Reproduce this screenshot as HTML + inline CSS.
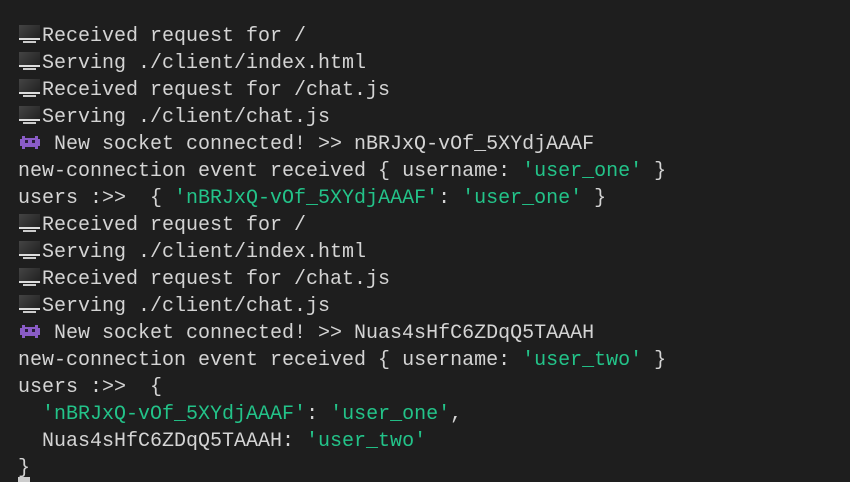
<!DOCTYPE html>
<html><head><meta charset="utf-8"><style>
html,body{margin:0;background:#1e1e1e;width:850px;height:482px;overflow:hidden}
pre{margin:0;position:absolute;left:18px;top:23px;font-family:"Liberation Mono",monospace;font-size:20px;line-height:27px;color:#d4d4d4;white-space:pre}
.g{color:#23c389}
.pc{display:inline-block;width:24px;height:20px;position:relative;vertical-align:-3px}
.pc:before{content:"";position:absolute;left:1px;top:1px;width:21px;height:13px;background:linear-gradient(135deg,#444 0,#333 50%,#222 100%);border-bottom:2px solid #ddd}
.pc:after{content:"";position:absolute;left:5px;top:17px;width:13px;height:2px;background:#ccc}
.al{display:inline-block;width:24px;height:20px;vertical-align:-3px}
.cur{position:absolute;left:18px;top:477px;width:12px;height:5px;background:#ccc}
</style></head><body>
<pre><span class="pc"></span>Received request for /
<span class="pc"></span>Serving ./client/index.html
<span class="pc"></span>Received request for /chat.js
<span class="pc"></span>Serving ./client/chat.js
<svg class="al" viewBox="0 0 24 20"><path fill="#8a5cc7" d="M4 4h3v2h10V4h3v3h2v7h-2v3h-3v-2H7v2H4v-3H2V7h2z"/><rect x="7" y="8" width="3" height="3" fill="#2a1e3a"/><rect x="14" y="8" width="3" height="3" fill="#2a1e3a"/></svg> New socket connected! &gt;&gt; nBRJxQ-vOf_5XYdjAAAF
new-connection event received { username: <span class="g">'user_one'</span> }
users :&gt;&gt;  { <span class="g">'nBRJxQ-vOf_5XYdjAAAF'</span>: <span class="g">'user_one'</span> }
<span class="pc"></span>Received request for /
<span class="pc"></span>Serving ./client/index.html
<span class="pc"></span>Received request for /chat.js
<span class="pc"></span>Serving ./client/chat.js
<svg class="al" viewBox="0 0 24 20"><path fill="#8a5cc7" d="M4 4h3v2h10V4h3v3h2v7h-2v3h-3v-2H7v2H4v-3H2V7h2z"/><rect x="7" y="8" width="3" height="3" fill="#2a1e3a"/><rect x="14" y="8" width="3" height="3" fill="#2a1e3a"/></svg> New socket connected! &gt;&gt; Nuas4sHfC6ZDqQ5TAAAH
new-connection event received { username: <span class="g">'user_two'</span> }
users :&gt;&gt;  {
  <span class="g">'nBRJxQ-vOf_5XYdjAAAF'</span>: <span class="g">'user_one'</span>,
  Nuas4sHfC6ZDqQ5TAAAH: <span class="g">'user_two'</span>
}</pre>
<div class="cur"></div>
</body></html>
